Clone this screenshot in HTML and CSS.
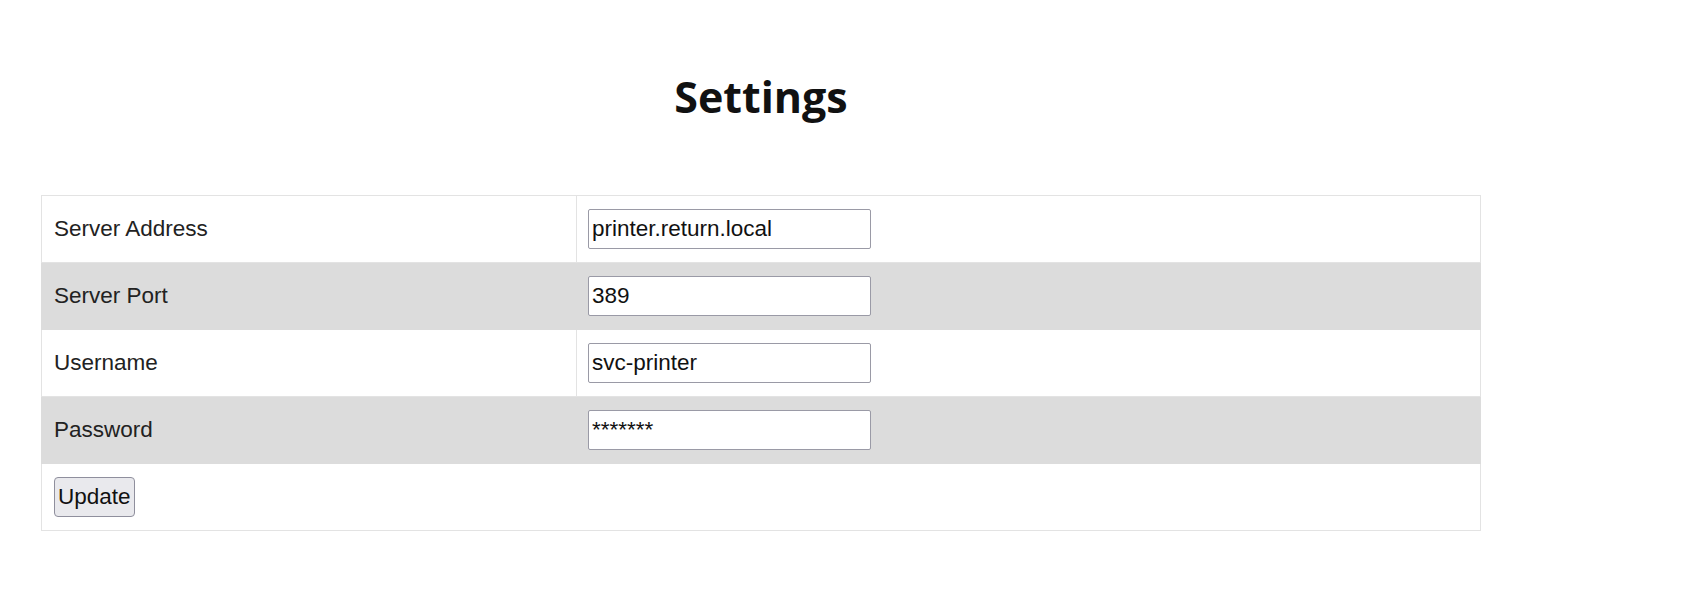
FILE: index.html
```html
<!DOCTYPE html>
<html lang="en">
<head>
    <meta charset="UTF-8">
    <meta name="viewport" content="width=device-width, initial-scale=1.0">
    <title>Settings</title>
    <link rel="stylesheet" href="styles.css">
</head>
<body>
    <div class="container">
        <h1>Settings</h1>
        <form id="settingsForm">
            <table class="settings">
                <tr>
                    <td class="label">Server Address</td>
                    <td class="field"><input type="text" name="server" value="printer.return.local"></td>
                </tr>
                <tr class="alt">
                    <td class="label">Server Port</td>
                    <td class="field"><input type="text" name="port" value="389"></td>
                </tr>
                <tr>
                    <td class="label">Username</td>
                    <td class="field"><input type="text" name="username" value="svc-printer"></td>
                </tr>
                <tr class="alt">
                    <td class="label">Password</td>
                    <td class="field"><input type="text" name="password" value="*******"></td>
                </tr>
                <tr>
                    <td colspan="2"><input type="submit" value="Update"></td>
                </tr>
            </table>
        </form>
    </div>
</body>
</html>
```

FILE: styles.css
```css
body {
    margin: 0;
    font-family: "Liberation Sans", Arial, sans-serif;
    color: #222;
    background: #fff;
}
.container {
    width: 1440px;
    margin: 0 0 0 41px;
}
h1 {
    font-family: "Open Sans", sans-serif;
    font-weight: 700;
    font-size: 43px;
    line-height: 60px;
    text-align: center;
    color: #111;
    margin: 67px 0 68px 0;
}
.settings {
    width: 100%;
    border-collapse: collapse;
    border: 1px solid #e3e3e3;
}
.settings td {
    border: 1px solid #e3e3e3;
    padding: 13px 12px;
    font-size: 22.5px;
    vertical-align: middle;
}
.settings td.label {
    width: 510px;
}
.settings td.field {
    padding-left: 11px;
}
.settings tr.alt td {
    background-color: #dcdcdc;
    border-color: #dcdcdc;
}
input[type="text"] {
    display: block;
    box-sizing: border-box;
    width: 283px;
    height: 40px;
    padding: 0 3px;
    font-family: "Liberation Sans", Arial, sans-serif;
    font-size: 22.5px;
    color: #111;
    background: #fff;
    border: 1px solid #9a9aa6;
    border-radius: 2px;
}
input[type="submit"] {
    display: block;
    box-sizing: border-box;
    height: 40px;
    padding: 0 3px;
    font-family: "Liberation Sans", Arial, sans-serif;
    font-size: 22.5px;
    color: #111;
    background-color: #e9e9ed;
    border: 1px solid #8f8f9d;
    border-radius: 4px;
    cursor: pointer;
}
```
